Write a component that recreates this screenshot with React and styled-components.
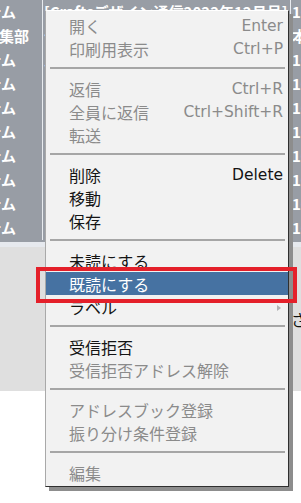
import styled, { createGlobalStyle } from "styled-components";

const GlobalStyle = createGlobalStyle`
  body {
    margin: 0;
    background: #ffffff;
    font-family: "Noto Sans CJK JP", "Noto Sans", sans-serif;
  }
`;

const rows = [
  { sender: "システム", pr: 26, subject: "[Craftsデザイン通信2022年12月号] 年末のご挨拶", date: "10/12" },
  { sender: "Crafts編集部", pr: 13, subject: "今月のおすすめ記事のご案内", date: "本日" },
  { sender: "システム", pr: 26, subject: "パスワード変更のお知らせ", date: "10/11" },
  { sender: "システム", pr: 26, subject: "ログイン通知", date: "10/10" },
  { sender: "システム", pr: 26, subject: "ログイン通知", date: "10/09" },
  { sender: "システム", pr: 26, subject: "ログイン通知", date: "10/08" },
  { sender: "システム", pr: 26, subject: "ログイン通知", date: "10/07" },
  { sender: "システム", pr: 26, subject: "ログイン通知", date: "10/06" },
  { sender: "システム", pr: 26, subject: "ログイン通知", date: "10/05" },
  { sender: "システム", pr: 26, subject: "ログイン通知", date: "10/04" },
];

const menu = [
  { label: "開く", shortcut: "Enter", disabled: true },
  { label: "印刷用表示", shortcut: "Ctrl+P", disabled: true },
  "sep",
  { label: "返信", shortcut: "Ctrl+R", disabled: true },
  { label: "全員に返信", shortcut: "Ctrl+Shift+R", disabled: true },
  { label: "転送", disabled: true },
  "sep",
  { label: "削除", shortcut: "Delete" },
  { label: "移動" },
  { label: "保存" },
  "sep",
  { label: "未読にする" },
  { label: "既読にする", active: true },
  { label: "ラベル", submenu: true },
  "sep",
  { label: "受信拒否" },
  { label: "受信拒否アドレス解除", disabled: true },
  "sep",
  { label: "アドレスブック登録", disabled: true },
  { label: "振り分け条件登録", disabled: true },
  "sep",
  { label: "編集", disabled: true },
];

function App() {
  return (
    <>
      <GlobalStyle />
      <Page>
        <MailList>
          {rows.map((row, i) => (
            <MailRow key={i}>
              <Sender $pr={row.pr}>
                <span>{row.sender}</span>
              </Sender>
              <Subject>{row.subject}</Subject>
              <DateCell>{row.date}</DateCell>
            </MailRow>
          ))}
        </MailList>
        <Strip />
        <PreviewHead>
          <PreviewText>さい。</PreviewText>
        </PreviewHead>

        <ContextMenu>
          {menu.map((item, i) =>
            item === "sep" ? (
              <Separator key={i} />
            ) : (
              <MenuItem key={i} $disabled={item.disabled} $active={item.active}>
                <span>{item.label}</span>
                {item.shortcut && <Shortcut>{item.shortcut}</Shortcut>}
                {item.submenu && <SubArrow />}
              </MenuItem>
            )
          )}
        </ContextMenu>
        <Marker />
      </Page>
    </>
  );
}
export default App;

const Page = styled.div`
    position: relative;
    width: 301px;
    height: 503px;
    overflow: hidden;
    background: #ffffff;
`;

const MailList = styled.div`
    background: #989da5;
    padding-bottom: 2px;
`;

const MailRow = styled.div`
    display: grid;
    grid-template-columns: 43px 248px 1fr;
    height: 24px;
    color: #ffffff;
    font-weight: 700;
    font-size: 15px;
    line-height: 24px;
    white-space: nowrap;
`;

const Sender = styled.div`
    display: flex;
    justify-content: flex-end;
    overflow: hidden;
    padding-right: ${({ $pr }) => $pr}px;
    border-right: 1px solid #e8ebef;
`;

const Subject = styled.div`
    overflow: hidden;
    padding-left: 1px;
    border-right: 1px solid #e8ebef;
`;

const DateCell = styled.div`
    overflow: hidden;
    padding-left: 1px;
`;

const Strip = styled.div`
    height: 5px;
    background: #e6e9ee;
`;

const PreviewHead = styled.div`
    height: 144px;
    background: #dfdfdf;
    padding: 60px 0 0 291px;
    box-sizing: border-box;
    overflow: hidden;
`;

const PreviewText = styled.div`
    color: #111111;
    font-size: 16px;
    white-space: nowrap;
`;

const ContextMenu = styled.div`
    position: absolute;
    left: 45px;
    top: 10px;
    width: 244px;
    box-sizing: border-box;
    padding: 3px 0 2px;
    background: #f2f2f2;
    border: 1px solid;
    border-color: #ffffff #2f2f2f #2f2f2f #a9a9a9;
    box-shadow: 4px 4px 0 #8d8d8d;
`;

const MenuItem = styled.div`
    display: flex;
    align-items: center;
    justify-content: space-between;
    height: 23px;
    padding: 0 5px 0 23px;
    font-size: 16px;
    white-space: nowrap;
    color: ${({ $disabled, $active }) =>
        $active ? "#ffffff" : $disabled ? "#8b8b8b" : "#141414"};
    background: ${({ $active }) => ($active ? "#4672a2" : "transparent")};
`;

const Shortcut = styled.span`
    font-family: "DejaVu Sans", sans-serif;
    font-size: 15.5px;
`;

const SubArrow = styled.span`
    width: 0;
    height: 0;
    margin: 3px 2px 0 0;
    border-left: 4px solid #b3b3b3;
    border-top: 3px solid transparent;
    border-bottom: 3px solid transparent;
`;

const Separator = styled.div`
    height: 2px;
    margin: 7px 3px 8px 4px;
    background: #a6a6a6;
`;

const Marker = styled.div`
    position: absolute;
    left: 36px;
    top: 267px;
    width: 261px;
    height: 36px;
    box-sizing: border-box;
    border: 4px solid #e4202a;
    pointer-events: none;
`;
